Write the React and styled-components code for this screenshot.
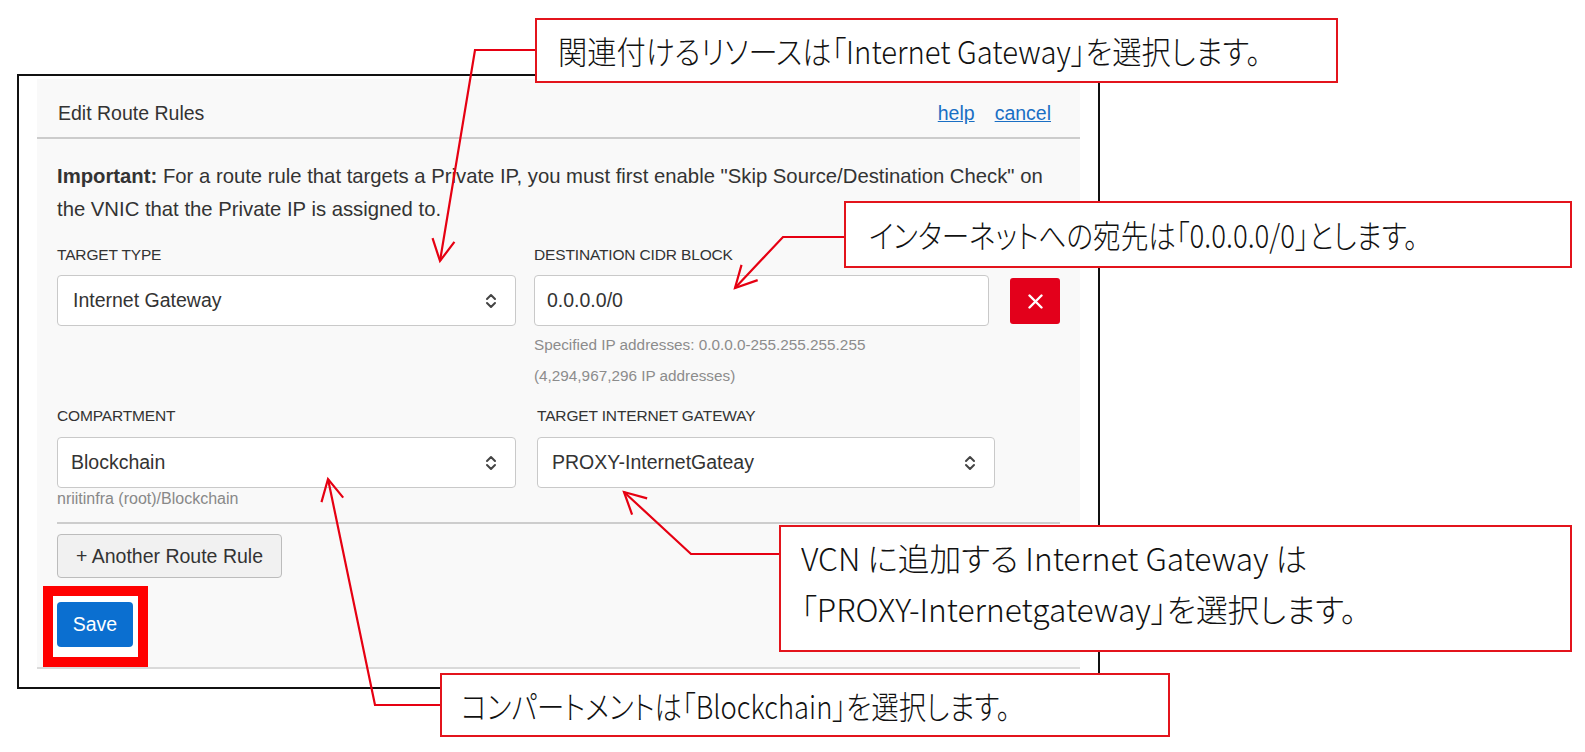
import React from 'react'
import styled, { createGlobalStyle } from 'styled-components'

const GlobalStyle = createGlobalStyle`
  html, body {
    margin: 0;
    padding: 0;
    background: #ffffff;
  }
  body {
    font-family: 'Liberation Sans', Arial, sans-serif;
  }
`

const Page = styled.div`
  position: relative;
  width: 1585px;
  height: 752px;
  overflow: hidden;
  box-sizing: border-box;
  padding: 74px 0 0 17px;
  background: #fff;
`

const Frame = styled.div`
  width: 1083px;
  height: 615px;
  box-sizing: border-box;
  border: 2px solid #111;
  padding: 3px 18px 0;
`

const Panel = styled.div`
  background: #f9f9f9;
  border-bottom: 2px solid #dadada;
`

const Header = styled.div`
  display: flex;
  align-items: center;
  justify-content: space-between;
  height: 60px;
  box-sizing: border-box;
  padding: 11px 29px 0 21px;
  border-bottom: 2px solid #cccccc;
`

const Title = styled.div`
  font-size: 19.5px;
  color: #333;
`

const Links = styled.div`
  display: flex;
  gap: 20px;
`

const Link = styled.a`
  font-size: 19.5px;
  color: #1a6fc4;
  text-decoration: underline;
  cursor: pointer;
`

const Body = styled.div`
  padding: 21px 20px 0;
`

const Notice = styled.p`
  margin: 0;
  font-size: 20.3px;
  line-height: 33px;
  color: #333;

  strong {
    font-weight: bold;
  }
`

const Row = styled.div`
  display: flex;
  align-items: flex-start;
  gap: ${p => p.$gap}px;
  margin-top: ${p => p.$top}px;
`

const Field = styled.div`
  display: flex;
  flex-direction: column;
  width: ${p => p.$w}px;
`

const Label = styled.div`
  font-size: 15.5px;
  line-height: 18px;
  color: #333;
  letter-spacing: -0.15px;
  text-transform: uppercase;
  margin-bottom: ${p => p.$gap || 11}px;
`

const Control = styled.div`
  display: flex;
  align-items: center;
  justify-content: space-between;
  height: 51px;
  box-sizing: border-box;
  padding: 0 ${p => p.$pr || 18}px 0 ${p => p.$pl}px;
  background: #fff;
  border: 1px solid #c9c9c9;
  border-radius: 4px;
  font-size: 19.5px;
  color: #333;
`

const Hint = styled.div`
  margin-top: 3px;
  font-size: 15.3px;
  line-height: 31px;
  color: #8c8c8c;
`

const SubHint = styled.div`
  font-size: 16px;
  line-height: 22px;
  color: #888;
`

const RemoveButton = styled.button`
  width: 50px;
  height: 46px;
  margin: 32px 0 0 3px;
  padding: 0;
  border: none;
  border-radius: 3px;
  background: #e3001b;
  display: grid;
  place-items: center;
`

const Divider = styled.div`
  height: 2px;
  background: #cdcdcd;
  margin-top: 12px;
`

const AddButton = styled.button`
  display: block;
  margin-top: 10px;
  width: 225px;
  height: 44px;
  background: #f1f1f1;
  border: 1px solid #bcbcbc;
  border-radius: 4px;
  font-family: inherit;
  font-size: 19.5px;
  color: #333;
  padding: 0;
`

const SaveHighlight = styled.div`
  margin-top: 8px;
  margin-left: -14px;
  width: 105px;
  height: 81px;
  box-sizing: border-box;
  border: 10px solid #ff0000;
  background: #fff;
  padding: 6px 0 0 4px;
`

const SaveButton = styled.button`
  width: 76px;
  height: 45px;
  border: none;
  border-radius: 4px;
  background: #0b6fd0;
  color: #fff;
  font-family: inherit;
  font-size: 19.5px;
  padding: 0;
`

const Overlay = styled.svg`
  position: absolute;
  left: 0;
  top: 0;
  pointer-events: none;
`

const Callout = styled.div`
  position: absolute;
  left: ${p => p.$x}px;
  top: ${p => p.$y}px;
  width: ${p => p.$w}px;
  height: ${p => p.$h}px;
  box-sizing: border-box;
  border: 2px solid #e3141c;
  background: #fff;
  padding: ${p => p.$pad || '0 0 0 20px'};
  display: flex;
  flex-direction: column;
  justify-content: ${p => (p.$multi ? 'flex-start' : 'center')};
  align-items: flex-start;
  font-family: 'Noto Sans CJK JP', sans-serif;
  font-feature-settings: 'palt';
  font-size: 32px;
  font-weight: 300;
  line-height: ${p => (p.$multi ? '51px' : '1.2')};
  color: #111;
  white-space: nowrap;
`

const CalloutText = styled.span`
  display: inline-block;
  transform: scaleX(${p => p.$sx});
  transform-origin: left center;
`

const Chevrons = () => (
  <svg width="12" height="18" viewBox="0 0 12 18">
    <path d="M2 7 L6 3 L10 7 M2 11 L6 15 L10 11" fill="none" stroke="#444" strokeWidth="2" strokeLinecap="round" strokeLinejoin="round" />
  </svg>
)

const Cross = () => (
  <svg width="15" height="15" viewBox="0 0 15 15">
    <path d="M1.5 1.5 L13.5 13.5 M13.5 1.5 L1.5 13.5" stroke="#fff" strokeWidth="2.4" strokeLinecap="round" />
  </svg>
)

const arrows = [
  [[535, 50], [475, 50], [440, 261]],
  [[844, 237], [783, 237], [735, 288]],
  [[779, 554], [691, 554], [624, 492]],
  [[440, 705], [375, 705], [328, 479]],
]

const head = (pts, len = 24, ang = 0.48) => {
  const [tx, ty] = pts[pts.length - 1]
  const [fx, fy] = pts[pts.length - 2]
  const d = Math.hypot(fx - tx, fy - ty)
  const ux = (fx - tx) / d
  const uy = (fy - ty) / d
  const arm = a => [
    tx + len * (ux * Math.cos(a) - uy * Math.sin(a)),
    ty + len * (ux * Math.sin(a) + uy * Math.cos(a)),
  ]
  const [ax, ay] = arm(ang)
  const [bx, by] = arm(-ang)
  return `M${ax} ${ay} L${tx} ${ty} L${bx} ${by}`
}

const App = () => {
  return (
    <Page>
      <GlobalStyle />
      <Frame>
        <Panel>
          <Header>
            <Title>Edit Route Rules</Title>
            <Links>
              <Link>help</Link>
              <Link>cancel</Link>
            </Links>
          </Header>
          <Body>
            <Notice>
              <strong>Important:</strong> For a route rule that targets a Private IP, you must first enable "Skip Source/Destination Check" on the VNIC that the Private IP is assigned to.
            </Notice>

            <Row $gap={18} $top={20}>
              <Field $w={459}>
                <Label>Target Type</Label>
                <Control $pl={15}>
                  <span>Internet Gateway</span>
                  <Chevrons />
                </Control>
              </Field>
              <Field $w={455}>
                <Label>Destination CIDR Block</Label>
                <Control $pl={12}>
                  <span>0.0.0.0/0</span>
                </Control>
                <Hint>
                  Specified IP addresses: 0.0.0.0-255.255.255.255
                  <br />
                  (4,294,967,296 IP addresses)
                </Hint>
              </Field>
              <RemoveButton>
                <Cross />
              </RemoveButton>
            </Row>

            <Row $gap={21} $top={16}>
              <Field $w={459}>
                <Label $gap={12}>Compartment</Label>
                <Control $pl={13}>
                  <span>Blockchain</span>
                  <Chevrons />
                </Control>
                <SubHint>nriitinfra (root)/Blockchain</SubHint>
              </Field>
              <Field $w={458}>
                <Label $gap={12}>Target Internet Gateway</Label>
                <Control $pl={14}>
                  <span>PROXY-InternetGateay</span>
                  <Chevrons />
                </Control>
              </Field>
            </Row>

            <Divider />
            <AddButton>+ Another Route Rule</AddButton>
            <SaveHighlight>
              <SaveButton>Save</SaveButton>
            </SaveHighlight>
          </Body>
        </Panel>
      </Frame>

      <Overlay width="1585" height="752">
        {arrows.map((pts, i) => (
          <g key={i} fill="none" stroke="#e60012" strokeWidth="2.2">
            <polyline points={pts.map(p => p.join(',')).join(' ')} />
            <path d={head(pts)} />
          </g>
        ))}
      </Overlay>

      <Callout $x={535} $y={18} $w={803} $h={65} $pad="0 0 0 21px">
        <CalloutText $sx={0.914}>関連付けるリソースは「Internet Gateway」を選択します。</CalloutText>
      </Callout>
      <Callout $x={844} $y={201} $w={728} $h={67} $pad="0 0 0 23px">
        <CalloutText $sx={0.862}>インターネットへの宛先は「0.0.0.0/0」とします。</CalloutText>
      </Callout>
      <Callout $x={779} $y={525} $w={793} $h={127} $pad="5px 0 0 20px" $multi>
        <CalloutText $sx={0.99}>VCN に追加する Internet Gateway は</CalloutText>
        <CalloutText $sx={0.99}>「PROXY-Internetgateway」を選択します。</CalloutText>
      </Callout>
      <Callout $x={440} $y={673} $w={730} $h={64} $pad="0 0 0 19px">
        <CalloutText $sx={0.856}>コンパートメントは「Blockchain」を選択します。</CalloutText>
      </Callout>
    </Page>
  )
}

export default App
